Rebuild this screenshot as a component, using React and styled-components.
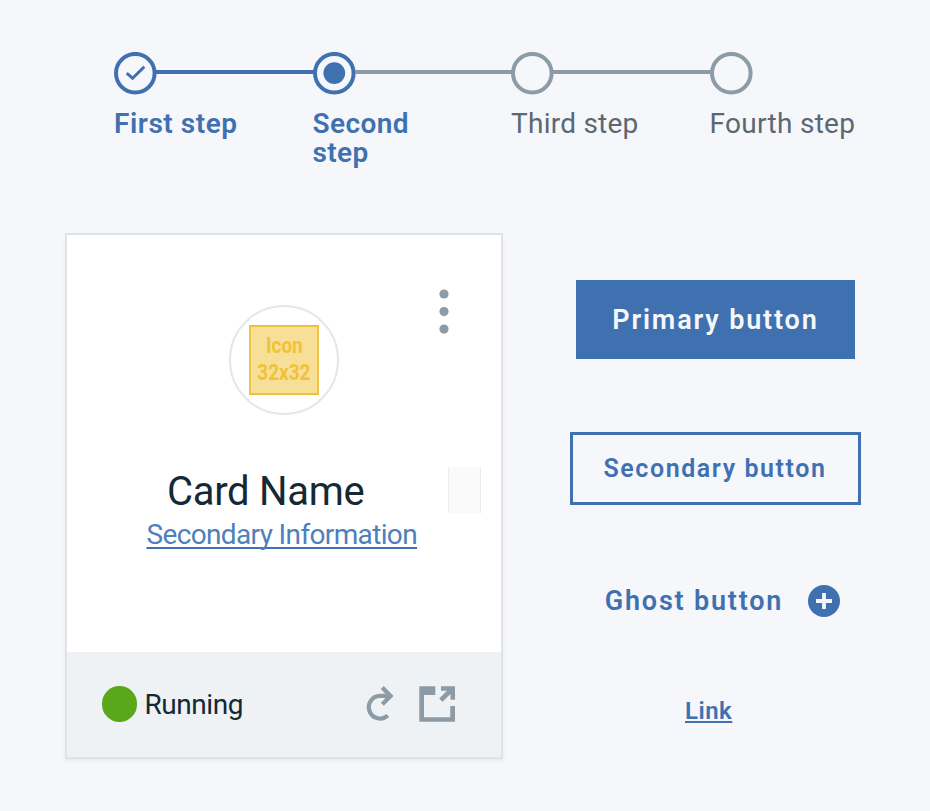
import React from 'react';
import styled, { createGlobalStyle } from 'styled-components';

const blue = '#3f71b1';
const gray = '#8c9ba5';

const GlobalStyle = createGlobalStyle`
  * { box-sizing: border-box; }
  body { margin: 0; background: #f5f7fb; font-family: Roboto, "Noto Sans", sans-serif; }
`;

const Page = styled.div`
  width: 930px;
  height: 811px;
  padding: 52px 0 0;
  overflow: hidden;
  background: #f5f7fb;
`;

const Stepper = styled.ol`
  display: flex;
  list-style: none;
  margin: 0 0 66px;
  padding: 0 0 0 114px;
`;

const Step = styled.li`
  width: ${p => (p.$last ? 160 : 198.5)}px;
  height: 115px;
`;

const StepTrack = styled.div`
  display: flex;
  height: 43px;
  margin-bottom: 14px;
`;

const StepLine = styled.span`
  flex: 1;
  height: 4px;
  margin: 17.5px -1px 0;
  background: ${p => (p.$done ? blue : gray)};
`;

const StepLabel = styled.div`
  width: ${p => (p.$narrow ? 120 : 170)}px;
  color: ${p => (p.$active ? blue : '#5a6872')};
  font-size: 28px;
  line-height: 29px;
  font-weight: ${p => (p.$active ? 600 : 400)};
  letter-spacing: ${p => p.$spacing}px;
`;

const Main = styled.main`
  display: flex;
  align-items: flex-start;
  padding-left: 65px;
`;

const Card = styled.article`
  width: 438px;
  height: 526px;
  border: 2px solid #dfe3e8;
  background: #fff;
  box-shadow: 0 2px 4px rgba(0, 0, 0, 0.06);
`;

const CardBody = styled.div`
  height: 417px;
  padding-top: 54px;
`;

const CardTop = styled.div`
  display: grid;
  grid-template-columns: 1fr auto 1fr;
  height: 178px;
`;

const Avatar = styled.div`
  grid-column: 2;
  display: flex;
  align-items: center;
  justify-content: center;
  width: 110px;
  height: 110px;
  margin-top: 16px;
  border: 2px solid #e3e7ec;
  border-radius: 50%;
`;

const IconPlaceholder = styled.div`
  flex: none;
  display: flex;
  flex-direction: column;
  align-items: center;
  width: 70px;
  height: 70px;
  padding-top: 6px;
  border: 2px solid #efc340;
  background: #f8df98;
  color: #f0c236;
  font-size: 22px;
  line-height: 26.5px;
  font-weight: 700;
`;

const Condensed = styled.span`
  transform: scaleX(0.86);
`;

const MenuButton = styled.button`
  justify-self: end;
  align-self: start;
  display: flex;
  margin-right: 52px;
  padding: 0;
  border: 0;
  background: none;
`;

const NameRow = styled.div`
  display: flex;
  align-items: flex-start;
  justify-content: space-between;
  height: 51px;
  padding: 0 20px 0 100px;
`;

const CardName = styled.h2`
  margin: 0;
  color: #152935;
  font-size: 40px;
  line-height: 49px;
  font-weight: 400;
  letter-spacing: -0.3px;
`;

const Swatch = styled.div`
  width: 33px;
  height: 46px;
  border: solid #ebebeb;
  border-width: 0 1px;
  background: #fafafa;
`;

const CardLink = styled.a`
  display: block;
  margin-left: 79.5px;
  color: #4f7fbc;
  font-size: 28px;
  line-height: 33px;
  font-weight: 400;
  letter-spacing: -0.64px;
  white-space: nowrap;
  text-decoration: underline ${blue};
  text-decoration-thickness: 2px;
  text-underline-offset: 3px;
  text-decoration-skip-ink: none;
`;

const CardFooter = styled.footer`
  display: flex;
  align-items: center;
  height: 105px;
  padding: 0 46px 1px 34.5px;
  background: #eef2f5;
`;

const StatusDot = styled.span`
  width: 35.5px;
  height: 35.5px;
  border-radius: 50%;
  background: #5aa71c;
`;

const StatusText = styled.span`
  flex: 1;
  margin-left: 7.5px;
  color: #152935;
  font-size: 28px;
  line-height: 33px;
  letter-spacing: -0.45px;
`;

const FooterIcons = styled.div`
  display: flex;
  gap: 23px;
`;

const Actions = styled.div`
  display: flex;
  flex-direction: column;
  align-items: center;
  width: 290.5px;
  margin-left: 67px;
  padding-top: 47px;
`;

const Button = styled.button`
  border: ${p => (p.$secondary ? `3.5px solid ${blue}` : '0')};
  width: ${p => (p.$secondary ? 290.5 : 279)}px;
  height: ${p => (p.$secondary ? 72.5 : 79)}px;
  margin: 0 0 ${p => (p.$secondary ? 80.5 : 73)}px;
  padding: 0 0 0 ${p => (p.$secondary ? 30.5 : 36.5)}px;
  background: ${p => (p.$secondary ? 'transparent' : blue)};
  color: ${p => (p.$secondary ? blue : '#f5f7fb')};
  font-family: inherit;
  font-size: ${p => (p.$secondary ? 25 : 27)}px;
  font-weight: 600;
  letter-spacing: ${p => (p.$secondary ? 1.57 : 1.85)}px;
  text-align: left;
  white-space: nowrap;
`;

const GhostButton = styled.button`
  display: flex;
  align-items: center;
  justify-content: space-between;
  width: 235px;
  height: 32px;
  margin: 0 0 80px 14px;
  padding: 0;
  border: 0;
  background: none;
  color: ${blue};
  font-family: inherit;
  font-size: 27px;
  line-height: 34px;
  font-weight: 600;
  letter-spacing: 1.8px;
`;

const TextLink = styled.a`
  align-self: flex-start;
  margin-left: 115px;
  color: ${blue};
  font-size: 24px;
  line-height: 28px;
  font-weight: 600;
  letter-spacing: 0.5px;
  text-decoration: underline;
  text-decoration-thickness: 2px;
  text-underline-offset: 2px;
`;

const Glyph = styled.svg`
  display: block;
  flex: none;
`;

const steps = [
  { label: 'First step', state: 'done', spacing: 0.55 },
  { label: 'Second step', state: 'current', spacing: 0.4 },
  { label: 'Third step', state: 'todo', spacing: 0.25 },
  { label: 'Fourth step', state: 'todo', spacing: 0.3 },
];

function StepMarker({ state }) {
  return (
    <Glyph width="43" height="43" viewBox="0 0 43 43" fill="none">
      <circle cx="21.3" cy="21.2" r="19.3" stroke={state === 'todo' ? gray : blue} strokeWidth="4" />
      {state === 'done' && <path d="M12.7 21.2 18.6 26.2 30.3 14.7" stroke={blue} strokeWidth="3" />}
      {state === 'current' && <circle cx="21.3" cy="21.1" r="10.9" fill={blue} />}
    </Glyph>
  );
}

function RedoIcon() {
  return (
    <Glyph width="32" height="36" viewBox="0 0 32 36" fill="none" stroke={gray} strokeWidth="4.2">
      <path d="M27 10.7H16a11.3 11.3 0 1 0 7.8 19.6" transform="translate(0 -.8)" />
      <path d="M18.3 2.2 26.6 10.5 18.3 18.8" transform="translate(0 -.6)" />
    </Glyph>
  );
}

function LaunchIcon() {
  return (
    <Glyph width="36" height="36" viewBox="0 0 36 36">
      <path fill={gray} d="M.3.3H16.3V9H5V31.3H31.3V20H36V35.8H.3Z" />
      <path fill={gray} d="M22 .3H36V13.7H31.5V8L23.5 15.8 20.2 12.5 28 4.8H22Z" />
    </Glyph>
  );
}

export default function App() {
  return (
    <Page>
      <GlobalStyle />
      <Stepper>
        {steps.map((step, i) => (
          <Step key={step.label} $last={i === steps.length - 1}>
            <StepTrack>
              <StepMarker state={step.state} />
              {i < steps.length - 1 && <StepLine $done={step.state === 'done'} />}
            </StepTrack>
            <StepLabel $active={step.state !== 'todo'} $narrow={step.state === 'current'} $spacing={step.spacing}>
              {step.label}
            </StepLabel>
          </Step>
        ))}
      </Stepper>
      <Main>
        <Card>
          <CardBody>
            <CardTop>
              <Avatar>
                <IconPlaceholder>
                  <Condensed>Icon</Condensed>
                  <Condensed>32x32</Condensed>
                </IconPlaceholder>
              </Avatar>
              <MenuButton aria-label="Menu">
                <Glyph width="10" height="46" viewBox="0 0 10 46" fill={gray}>
                  <circle cx="5" cy="5" r="4.6" />
                  <circle cx="5" cy="22.6" r="4.6" />
                  <circle cx="5" cy="40.1" r="4.6" />
                </Glyph>
              </MenuButton>
            </CardTop>
            <NameRow>
              <CardName>Card Name</CardName>
              <Swatch />
            </NameRow>
            <CardLink>Secondary Information</CardLink>
          </CardBody>
          <CardFooter>
            <StatusDot />
            <StatusText>Running</StatusText>
            <FooterIcons>
              <RedoIcon />
              <LaunchIcon />
            </FooterIcons>
          </CardFooter>
        </Card>
        <Actions>
          <Button>Primary button</Button>
          <Button $secondary>Secondary button</Button>
          <GhostButton>
            Ghost button
            <Glyph width="32" height="32" viewBox="0 0 32 32">
              <circle cx="16" cy="16" r="16" fill={blue} />
              <path d="M16 8V24M8 16H24" stroke="#f5f7fb" strokeWidth="3.8" />
            </Glyph>
          </GhostButton>
          <TextLink>Link</TextLink>
        </Actions>
      </Main>
    </Page>
  );
}
